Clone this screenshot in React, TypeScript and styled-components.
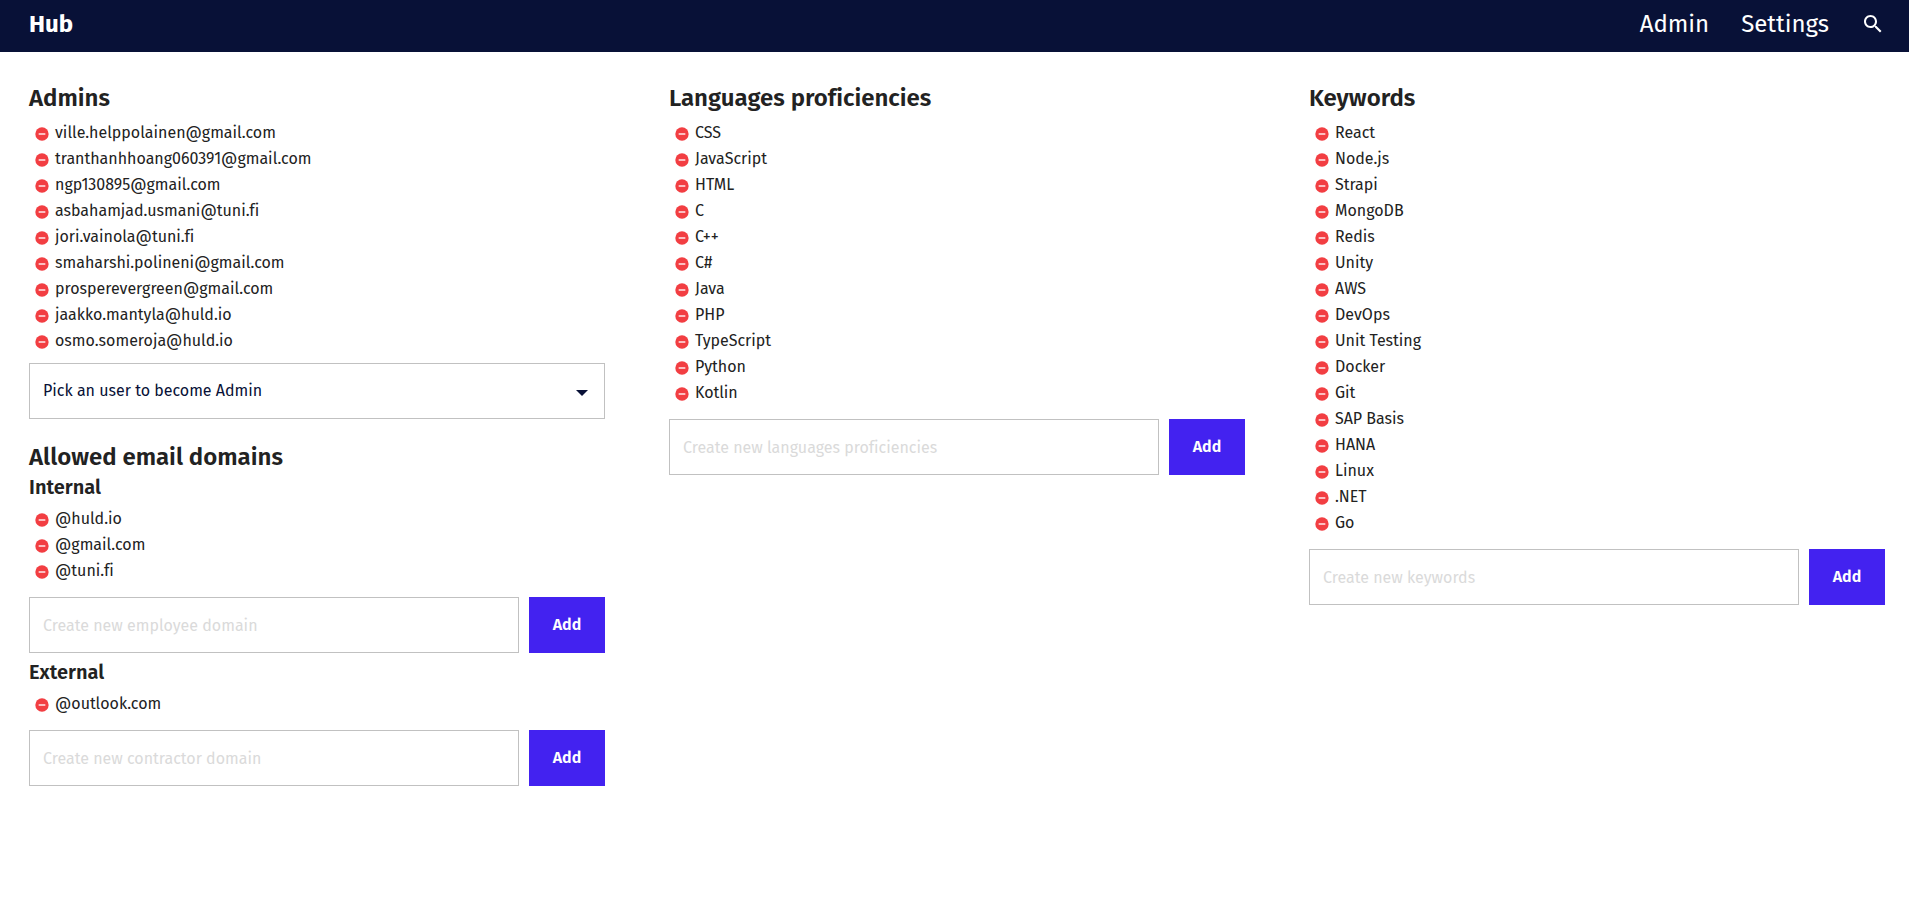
import React, { useState } from "react";
import styled, { createGlobalStyle } from "styled-components";

const GlobalStyle = createGlobalStyle`
  *, *::before, *::after { box-sizing: border-box; }
  body {
    margin: 0;
    background: #fff;
    color: #222;
    font: 400 16px/26px "Fira Sans", Roboto, "Noto Sans", sans-serif;
    font-variant-ligatures: none;
  }
  button, input, select { font: inherit; font-variant-ligatures: none; }
`;

const Header = styled.header`
  display: flex;
  align-items: center;
  justify-content: space-between;
  height: 52px;
  padding: 0 24px 4px 29px;
  background: #081137;
  color: #fff;
`;

const Brand = styled.a`
  color: inherit;
  font-size: 24px;
  font-weight: 700;
  line-height: 32px;
  text-decoration: none;
`;

const Nav = styled.nav`
  display: flex;
  align-items: center;
  gap: 32px;
`;

const NavLink = styled.a`
  color: inherit;
  font-size: 24px;
  font-weight: 400;
  line-height: 32px;
  text-decoration: none;
`;

const IconButton = styled.button`
  display: flex;
  padding: 0;
  border: 0;
  background: none;
  color: inherit;
  cursor: pointer;
`;

const Icon = styled.svg<{ $size: number }>`
  display: block;
  width: ${(p) => p.$size}px;
  height: ${(p) => p.$size}px;
  fill: currentColor;
`;

const Columns = styled.main`
  display: grid;
  grid-template-columns: repeat(3, minmax(0, 1fr));
  gap: 64px;
  align-items: start;
  padding: 28px 24px 28px 29px;
`;

const Column = styled.div`
  display: flex;
  flex-direction: column;
  gap: 20px;
`;

const Title = styled.h2`
  margin: 0;
  font-size: 24px;
  font-weight: 600;
  line-height: 36px;
`;

const Subtitle = styled.h3`
  margin: 0 0 3px;
  font-size: 20px;
  font-weight: 600;
  line-height: 24px;
`;

const DomainGroup = styled.div`
  & + & {
    margin-top: 7px;
  }
`;

const List = styled.ul`
  margin: 0;
  padding: 4px 0 0 5px;
  list-style: none;
`;

const Item = styled.li`
  display: flex;
  align-items: center;
  gap: 5px;
  height: 26px;
`;

const RemoveButton = styled(IconButton)`
  padding-top: 2px;
  color: #f23e42;
`;

const AddForm = styled.form`
  display: flex;
  gap: 10px;
  margin-top: 13px;
`;

const TextInput = styled.input`
  flex: 1;
  min-width: 0;
  height: 56px;
  padding: 0 13px;
  border: 1px solid #c1c1c1;
  border-radius: 0;
  background: #fff;
  color: #081137;

  &::placeholder {
    color: #dadada;
    opacity: 1;
  }
`;

const AddButton = styled.button`
  width: 76px;
  height: 56px;
  padding: 0;
  border: 0;
  background: #4322f0;
  color: #fff;
  font-weight: 600;
  cursor: pointer;
`;

const SelectBox = styled.div`
  display: grid;
  align-items: center;
  margin-top: 9px;
  color: #081137;

  & > * {
    grid-area: 1 / 1;
  }
  & > svg {
    justify-self: end;
    margin: 2px 11px 0 0;
    pointer-events: none;
  }
`;

const Select = styled.select`
  width: 100%;
  height: 56px;
  padding: 0 40px 0 13px;
  border: 1px solid #c1c1c1;
  border-radius: 0;
  background: #fff;
  color: inherit;
  appearance: none;
`;

function EditableList({ items, onRemove }: { items: string[]; onRemove: (item: string) => void }) {
  return (
    <List>
      {items.map((item) => (
        <Item key={item}>
          <RemoveButton type="button" aria-label={`Remove ${item}`} onClick={() => onRemove(item)}>
            <Icon $size={16} viewBox="0 0 24 24" aria-hidden="true">
              <circle cx="12" cy="12" r="10" />
              <path d="M7 11h10v2H7z" fill="#fff" />
            </Icon>
          </RemoveButton>
          <span>{item}</span>
        </Item>
      ))}
    </List>
  );
}

function EditableCollection({ initial, placeholder }: { initial: string[]; placeholder: string }) {
  const [items, setItems] = useState(initial);
  const [value, setValue] = useState("");

  const submit = (event: React.FormEvent) => {
    event.preventDefault();
    const next = value.trim();
    if (next && !items.includes(next)) setItems([...items, next]);
    setValue("");
  };

  return (
    <>
      <EditableList items={items} onRemove={(item) => setItems(items.filter((i) => i !== item))} />
      <AddForm onSubmit={submit}>
        <TextInput
          aria-label={placeholder}
          placeholder={placeholder}
          value={value}
          onChange={(event) => setValue(event.target.value)}
        />
        <AddButton type="submit">Add</AddButton>
      </AddForm>
    </>
  );
}

const adminEmails = [
  "ville.helppolainen@gmail.com",
  "tranthanhhoang060391@gmail.com",
  "ngp130895@gmail.com",
  "asbahamjad.usmani@tuni.fi",
  "jori.vainola@tuni.fi",
  "smaharshi.polineni@gmail.com",
  "prosperevergreen@gmail.com",
  "jaakko.mantyla@huld.io",
  "osmo.someroja@huld.io",
];

const languages = [
  "CSS", "JavaScript", "HTML", "C", "C++", "C#", "Java", "PHP", "TypeScript", "Python", "Kotlin",
];

const keywords = [
  "React", "Node.js", "Strapi", "MongoDB", "Redis", "Unity", "AWS", "DevOps",
  "Unit Testing", "Docker", "Git", "SAP Basis", "HANA", "Linux", ".NET", "Go",
];

export default function App() {
  const [admins, setAdmins] = useState(adminEmails);

  return (
    <>
      <GlobalStyle />
      <Header>
        <Brand href="#">Hub</Brand>
        <Nav>
          <NavLink href="#admin">Admin</NavLink>
          <NavLink href="#settings">Settings</NavLink>
          <IconButton type="button" aria-label="Search">
            <Icon $size={24} viewBox="0 0 24 24" aria-hidden="true">
              <path d="M15.5 14h-.79l-.28-.27C15.41 12.59 16 11.11 16 9.5 16 5.91 13.09 3 9.5 3S3 5.91 3 9.5 5.91 16 9.5 16c1.61 0 3.09-.59 4.23-1.57l.27.28v.79l5 4.99L20.49 19l-4.99-5zm-6 0C7.01 14 5 11.99 5 9.5S7.01 5 9.5 5 14 7.01 14 9.5 11.99 14 9.5 14z" />
            </Icon>
          </IconButton>
        </Nav>
      </Header>
      <Columns>
        <Column>
          <section>
            <Title>Admins</Title>
            <EditableList
              items={admins}
              onRemove={(item) => setAdmins(admins.filter((a) => a !== item))}
            />
            <SelectBox>
              <Select aria-label="Pick an user to become Admin">
                <option>Pick an user to become Admin</option>
              </Select>
              <Icon $size={24} viewBox="0 0 24 24" aria-hidden="true">
                <path d="M6 10l6 6 6-6z" />
              </Icon>
            </SelectBox>
          </section>
          <section>
            <Title>Allowed email domains</Title>
            <DomainGroup>
              <Subtitle>Internal</Subtitle>
              <EditableCollection
                initial={["@huld.io", "@gmail.com", "@tuni.fi"]}
                placeholder="Create new employee domain"
              />
            </DomainGroup>
            <DomainGroup>
              <Subtitle>External</Subtitle>
              <EditableCollection
                initial={["@outlook.com"]}
                placeholder="Create new contractor domain"
              />
            </DomainGroup>
          </section>
        </Column>
        <Column>
          <section>
            <Title>Languages proficiencies</Title>
            <EditableCollection initial={languages} placeholder="Create new languages proficiencies" />
          </section>
        </Column>
        <Column>
          <section>
            <Title>Keywords</Title>
            <EditableCollection initial={keywords} placeholder="Create new keywords" />
          </section>
        </Column>
      </Columns>
    </>
  );
}
